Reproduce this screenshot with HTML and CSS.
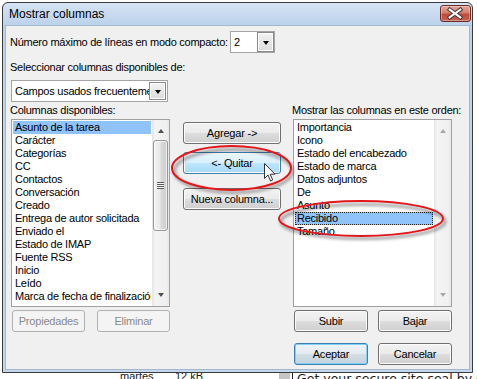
FILE: index.html
```html
<!DOCTYPE html>
<html lang="es">

<head>
    <meta charset="UTF-8">
    <title>Mostrar columnas</title>
    <link rel="stylesheet" href="styles.css">
</head>

<body>

    <div class="window">
        <div class="titlebar">
            <span class="title">Mostrar columnas</span>
            <div class="close">
                <svg width="31" height="17" viewBox="0 0 31 17">
                    <path d="M10 4.5 L21 12.5 M10 12.5 L21 4.5" stroke="#3d3d3d" stroke-width="4.2" stroke-linecap="square" />
                    <path d="M10 4.5 L21 12.5 M10 12.5 L21 4.5" stroke="#fff" stroke-width="2.2" stroke-linecap="square" />
                </svg>
            </div>
        </div>

        <div class="client">
            <div class="row-compact">
                <span class="label compact-label">Número máximo de líneas en modo compacto:</span>
                <div class="combo combo-small">
                    <span class="combo-text">2</span>
                    <div class="drop"></div>
                </div>
            </div>

            <div class="label sel-label">Seleccionar columnas disponibles de:</div>
            <div class="combo combo-wide">
                <span class="combo-text">Campos usados frecuentemente</span>
                <div class="drop"></div>
            </div>

            <div class="columns">
                <!-- available columns -->
                <div class="col col-side">
                    <div class="label col-label">Columnas disponibles:</div>
                    <div class="list">
                        <div class="items">
                            <div class="item selected">Asunto de la tarea</div>
                            <div class="item">Carácter</div>
                            <div class="item">Categorías</div>
                            <div class="item">CC</div>
                            <div class="item">Contactos</div>
                            <div class="item">Conversación</div>
                            <div class="item">Creado</div>
                            <div class="item">Entrega de autor solicitada</div>
                            <div class="item">Enviado el</div>
                            <div class="item">Estado de IMAP</div>
                            <div class="item">Fuente RSS</div>
                            <div class="item">Inicio</div>
                            <div class="item">Leído</div>
                            <div class="item">Marca de fecha de finalización</div>
                        </div>
                        <div class="scroll">
                            <div class="arrow up"></div>
                            <div class="track">
                                <div class="thumb"><div class="grip"></div></div>
                            </div>
                            <div class="arrow down"></div>
                        </div>
                    </div>
                    <div class="pair pair-left">
                        <div class="btn disabled">Propiedades</div>
                        <div class="btn disabled">Eliminar</div>
                    </div>
                </div>

                <!-- add / remove -->
                <div class="col col-mid">
                    <div class="btn wide">Agregar -&gt;</div>
                    <div class="btn wide hover quitar">&lt;- Quitar</div>
                    <div class="btn wide nueva">Nueva columna...</div>
                </div>

                <!-- shown columns -->
                <div class="col col-side">
                    <div class="label col-label">Mostrar las columnas en este orden:</div>
                    <div class="list">
                        <div class="items">
                            <div class="item">Importancia</div>
                            <div class="item">Icono</div>
                            <div class="item">Estado del encabezado</div>
                            <div class="item">Estado de marca</div>
                            <div class="item">Datos adjuntos</div>
                            <div class="item">De</div>
                            <div class="item">Asunto</div>
                            <div class="item selected focus">Recibido</div>
                            <div class="item">Tamaño</div>
                        </div>
                        <div class="scroll off">
                            <div class="arrow up"></div>
                            <div class="track"></div>
                            <div class="arrow down"></div>
                        </div>
                    </div>
                    <div class="pair">
                        <div class="btn">Subir</div>
                        <div class="btn">Bajar</div>
                    </div>
                    <div class="pair pair-ok">
                        <div class="btn default">Aceptar</div>
                        <div class="btn">Cancelar</div>
                    </div>
                </div>
            </div>
        </div>
    </div>

    <div class="behind">
        <span class="b-day">martes</span>
        <span class="b-size">12 kB</span>
        <span class="b-box"></span>
        <span class="b-line"></span>
        <span class="b-text">Get your secure site seal by clicking here</span>
    </div>

    <!-- annotation marks drawn over the dialog -->
    <svg class="marks" width="477" height="379" viewBox="0 0 477 379">
        <defs>
            <filter id="soft" x="-20%" y="-60%" width="140%" height="220%">
                <feGaussianBlur stdDeviation="1.4" />
            </filter>
        </defs>
        <g fill="none">
            <ellipse cx="233.5" cy="171" rx="59" ry="21.5" stroke="#000" stroke-opacity="0.35" stroke-width="3" filter="url(#soft)" />
            <ellipse cx="231.5" cy="168" rx="59.5" ry="22" stroke="#e3161c" stroke-width="2" />
            <ellipse cx="363" cy="221.5" rx="82" ry="17" stroke="#000" stroke-opacity="0.35" stroke-width="3" filter="url(#soft)" />
            <ellipse cx="361" cy="218.5" rx="82" ry="17.5" stroke="#e3161c" stroke-width="2" />
        </g>
        <path d="M264.5 163.5 L264.5 178.5 L268 175 L270.6 181 L272.7 180 L270.2 174.2 L275 174.2 Z" fill="#fff" stroke="#333" stroke-width="1" stroke-linejoin="round" />
    </svg>

</body>

</html>
```

FILE: styles.css
```css
* {
    margin: 0;
    padding: 0;
    box-sizing: border-box;
}

body {
    width: 477px;
    height: 379px;
    overflow: hidden;
    position: relative;
    background: #fff;
    font-family: "Liberation Sans", Arial, sans-serif;
    font-size: 11px;
    color: #000;
}

/* window frame */

.window {
    margin: 2px 0 0 2px;
    width: 471px;
    height: 371px;
    border: 1px solid #3b3b3b;
    border-radius: 6px 6px 0 0;
    background: linear-gradient(#d5e3f4, #bcd2eb 22px, #c3d7ee);
    padding: 0 2px 2px;
    display: flex;
    flex-direction: column;
}

.titlebar {
    height: 22px;
    display: flex;
    justify-content: space-between;
    align-items: flex-start;
}

.title {
    font-size: 12px;
    line-height: 14px;
    margin: 4px 0 0 4px;
}

.close {
    width: 31px;
    height: 17px;
    margin: 2px -1px 0 0;
    border: 1px solid #6d2a24;
    border-radius: 3px;
    background: linear-gradient(#e4a79d, #d47f70 45%, #c24a3a 55%, #c9604c);
    box-shadow: inset 0 0 0 1px rgba(255, 255, 255, 0.35);
    display: flex;
}

.close svg {
    margin: -1px 0 0 -1px;
}

.client {
    flex: 1;
    border: 1px solid #a3b7cf;
    background: #f0f0f0;
    padding: 5px 0 0 5px;
}

.label {
    line-height: 13px;
    letter-spacing: -0.25px;
    white-space: nowrap;
}

/* combo boxes */

.row-compact {
    display: flex;
    align-items: center;
    height: 22px;
}

.compact-label {
    width: 220px;
    margin-left: -1px;
}

.combo {
    height: 22px;
    border: 1px solid #a5a5a5;
    background: #fff;
    display: flex;
    align-items: center;
}

.combo-small {
    width: 45px;
}

.combo-wide {
    width: 157px;
    margin-top: 6px;
}

.combo-text {
    flex: 1;
    padding-left: 3px;
    overflow: hidden;
    white-space: nowrap;
    letter-spacing: -0.25px;
}

.drop {
    width: 17px;
    height: 20px;
    border: 1px solid #8a8a8a;
    background: linear-gradient(#f2f2f2, #dcdcdc);
    box-shadow: inset 0 0 0 1px #fff;
    display: flex;
    align-items: center;
    justify-content: center;
}

.combo-wide .drop {
    height: 18px;
    margin-right: 1px;
}

.drop::after {
    content: "";
    border-top: 4px solid #000;
    border-left: 3.5px solid transparent;
    border-right: 3.5px solid transparent;
    margin-top: 1px;
}

.sel-label {
    margin: 8px 0 0 -1px;
}

/* three columns */

.columns {
    display: flex;
    margin-top: 2px;
}

.col {
    display: flex;
    flex-direction: column;
}

.col-side {
    width: 159px;
}

.col-mid {
    width: 98px;
    margin: 0 12px 0 13px;
    padding-top: 18px;
}

.col-label {
    height: 13px;
    margin-left: -1px;
}

.list {
    margin-top: 2px;
    height: 188px;
    border: 1px solid #a0a0a0;
    background: #fff;
    display: flex;
}

.items {
    flex: 1;
    min-width: 0;
    padding: 1px;
}

.item {
    height: 13px;
    line-height: 13px;
    padding-left: 2px;
    white-space: nowrap;
    overflow: hidden;
    letter-spacing: -0.25px;
}

.item.selected {
    background: #90c3fa;
}

.item.focus {
    outline: 1px dotted #222;
    outline-offset: -1px;
}

/* scroll bars */

.scroll {
    width: 17px;
    display: flex;
    flex-direction: column;
    background: linear-gradient(to right, #e4e4e4, #f4f4f4 3px, #f0f0f0 14px, #e9e9e9);
}

.arrow {
    height: 20px;
    display: flex;
    align-items: center;
    justify-content: center;
}

.arrow::after {
    content: "";
    border-left: 3.5px solid transparent;
    border-right: 3.5px solid transparent;
}

.arrow.up::after {
    border-bottom: 4px solid #505050;
    margin-top: 2px;
}

.arrow.down::after {
    border-top: 4px solid #505050;
    margin-top: -2px;
}

.scroll.off .arrow.up::after {
    border-bottom-color: #a8a8a8;
}

.scroll.off .arrow.down::after {
    border-top-color: #a8a8a8;
}

.track {
    flex: 1;
}

.thumb {
    height: 91px;
    margin: 0 1px;
    border: 1px solid #979797;
    border-radius: 3px;
    background: linear-gradient(to right, #f3f3f3, #e9e9e9 45%, #d9d9d9 55%, #cdcdcd);
    box-shadow: inset 0 0 0 1px rgba(255, 255, 255, 0.7);
    display: flex;
    align-items: center;
    justify-content: center;
}

.grip {
    width: 7px;
    height: 7px;
    background: repeating-linear-gradient(#5a5a5a 0 1px, #f6f6f6 1px 2px);
}

/* buttons */

.btn {
    width: 74px;
    height: 22px;
    border: 1px solid #707070;
    border-radius: 3px;
    background: linear-gradient(#f2f2f2, #ebebeb 48%, #dddddd 52%, #cfcfcf);
    box-shadow: inset 0 0 0 1px #fcfcfc;
    display: flex;
    align-items: center;
    justify-content: center;
    letter-spacing: -0.2px;
    white-space: nowrap;
}

.btn.wide {
    width: 98px;
}

.btn.hover {
    border-color: #3c7fb1;
    background: linear-gradient(#eaf6fd, #d9f0fc 48%, #bee6fd 52%, #a7d9f5);
}

.btn.default {
    border-color: #3c7fb1;
    background: linear-gradient(#eef3f7, #e4ebf0 48%, #d3dde5 52%, #c7d3dd);
    box-shadow: inset 0 0 0 1px #7fd2f6;
}

.btn.disabled {
    border-color: #adb2b5;
    background: #f4f4f4;
    box-shadow: none;
    color: #8a8a8a;
}

.quitar {
    margin-top: 8px;
}

.nueva {
    margin-top: 14px;
}

.pair {
    display: flex;
    gap: 10px;
    margin-top: 3px;
    padding-left: 1px;
}

.pair-left {
    gap: 12px;
}

.pair-ok {
    margin-top: 11px;
}

/* window behind the dialog */

.behind {
    height: 6px;
    overflow: hidden;
    display: flex;
    padding-left: 120px;
}

.behind span {
    flex: none;
    line-height: 11px;
    margin-top: -2px;
    color: #1a1a1a;
}

.b-day {
    width: 55px;
}

.b-size {
    width: 104px;
}

.behind .b-box {
    width: 11px;
    margin-top: 0;
    background: #c4c4c4;
}

.behind .b-line {
    width: 1px;
    margin: 0 4px 0 2px;
    background: #222;
}

.behind .b-text {
    font-family: "DejaVu Sans", Verdana, sans-serif;
    font-size: 12.5px;
    line-height: 14px;
    margin-top: -1px;
    white-space: nowrap;
}

/* annotation overlay */

.marks {
    position: absolute;
    top: 0;
    left: 0;
    pointer-events: none;
}
```
